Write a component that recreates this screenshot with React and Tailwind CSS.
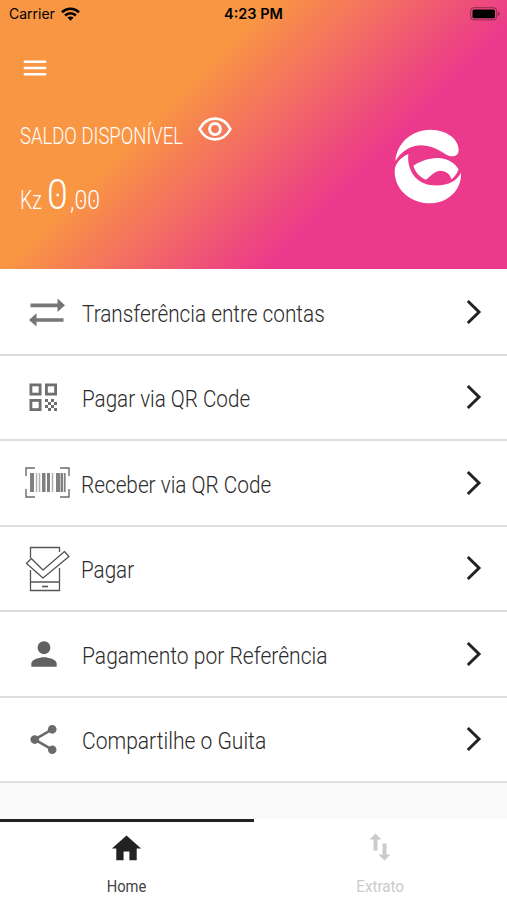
import React, { useState } from "react";
import { MdHome, MdMenu, MdPerson, MdShare } from "react-icons/md";

function WifiIcon() {
  return (
    <svg width="19" height="14" viewBox="0 0 19 14" fill="none" stroke="#000" strokeWidth="2.7">
      <path d="M1 5.2C5.8 .6 13.2 .6 18 5.2" />
      <path d="M4.1 8.4c3.1-2.9 7.7-2.9 10.8 0" />
      <path d="M9.5 13.8 6.4 10.6c1.8-1.6 4.4-1.6 6.2 0z" fill="#000" stroke="none" />
    </svg>
  );
}

function BatteryIcon() {
  return (
    <svg width="31" height="14" viewBox="0 0 31 14">
      <rect x=".7" y=".7" width="26" height="12.2" rx="3.2" fill="none" stroke="#000" strokeOpacity=".4" />
      <rect x="2.5" y="2.4" width="22.5" height="8.8" rx="1.5" fill="#000" />
      <path d="M28 4.5c2.3.8 2.3 3.8 0 4.6z" fill="#000" fillOpacity=".4" />
    </svg>
  );
}

function EyeIcon() {
  return (
    <svg width="34" height="24" viewBox="0 0 34 24" fill="none" stroke="#fff">
      <path d="M1.600 12C5 5.300 10 1.700 17 1.700S29 5.300 32.400 12C29 18.700 24 22.300 17 22.300S5 18.700 1.600 12z" strokeWidth="2.700" strokeLinejoin="round" />
      <circle cx="17" cy="12" r="5.400" strokeWidth="3" />
    </svg>
  );
}

function Logo() {
  return (
    <svg width="76" height="80" viewBox="0 0 228 240" fill="#fff">
      <path d="M16 105C20 55 60 12 122 11C175 12 206 42 206 72C206 89 192 93 178 90C160 85 138 58 92 58C55 60 32 80 16 105z" />
      <path d="M55 84C30 95 14 115 14 135C14 195 65 231 118 232C175 232 216 190 213 140C200 165 175 180 130 178C80 175 50 135 55 84z" />
      <path d="M70 119C95 103 120 96 148 96C175 98 195 112 206 130C200 145 192 155 184 160C182 145 168 134 150 134C132 136 122 150 108 161C88 153 76 138 70 119z" />
    </svg>
  );
}

function TransferIcon() {
  return (
    <svg width="36" height="29" viewBox="0 0 36 29" fill="#757575">
      <path d="M1.500 5.500h27V.5L36 7.300l-7.500 6.800V9.200h-27z" />
      <path d="M34.500 20.200h-27v-5L0 22l7.500 6.500v-4.800h27z" />
    </svg>
  );
}

const QR_DOTS = [[17, 16], [23, 16], [20, 19], [26, 19], [17, 22], [23, 22], [20, 25], [26, 25]];

function QrIcon() {
  return (
    <svg width="29" height="29" viewBox="0 0 29 29">
      <g fill="none" stroke="#6f6f6f" strokeWidth="2.800">
        <rect x="1.900" y="1.900" width="9.200" height="9.200" />
        <rect x="17.400" y="1.900" width="9.200" height="9.200" />
        <rect x="1.900" y="17.400" width="9.200" height="9.200" />
      </g>
      {QR_DOTS.map(([x, y]) => (
        <rect key={`${x}-${y}`} x={x - 1} y={y} width="3" height="3" fill="#6f6f6f" />
      ))}
    </svg>
  );
}

function BarcodeIcon() {
  return (
    <svg width="46" height="32" viewBox="0 0 46 32">
      <path d="M1 9V1h9M35 1h9v8M44 22v8h-9M10 30H1v-8" fill="none" stroke="#6b6b6b" strokeWidth="1.400" />
      <g fill="#808080">
        <path d="M5 6h4v19H5z" />
        <path d="M17 6h3.500v19H17zM22 6h3v19h-3z" />
        <path d="M31 6h4.500v19H31zM36 6h2v19h-2zM38.800 6h1.800v19h-1.800z" />
      </g>
      <path d="M11.500 6v19M14.500 6v19M27.500 6v19" stroke="#b0b0b0" strokeWidth="1.500" />
    </svg>
  );
}

function PayIcon() {
  return (
    <svg width="46" height="46" viewBox="0 0 46 46" fill="none" stroke="#555" strokeWidth="1.300">
      <path d="M5.500 12V1.500h29V6M5.500 24v20.500h29V22M5.500 36h29" />
      <path d="M17 40.500h6" strokeWidth="1.600" />
      <path d="M1.500 17.500 6.300 12.500 18 24 39.500 5.500 44 10.500 18 32z" strokeLinejoin="round" />
    </svg>
  );
}

function ChevronIcon() {
  return (
    <svg width="16" height="26" viewBox="0 0 16 26" fill="none" stroke="#222" strokeWidth="3">
      <path d="M1.800 2 13 13 1.800 24" />
    </svg>
  );
}

function StatementIcon() {
  return (
    <svg width="22" height="28" viewBox="0 0 22 28" fill="#cbcbcb">
      <path d="M6.500.5 12.500 6.500h-4v11h-4v-11h-4z" />
      <path d="M15.500 27.500 9.500 21.500h4v-11h4v11h4z" />
    </svg>
  );
}

// Zero with the small dot in its middle
function DottedZero({ dot }) {
  return (
    <span className="relative inline-block">
      0
      <span className={`absolute left-1/2 top-1/2 -translate-x-1/2 -translate-y-1/2 rounded-full bg-white ${dot}`} />
    </span>
  );
}

const items = [
  { label: "Transferência entre contas", icon: <TransferIcon />, pad: "pl-[29px]", text: "ml-[82px] scale-x-[0.865]" },
  { label: "Pagar via QR Code", icon: <QrIcon />, pad: "pl-[29px]", text: "ml-[82px] scale-x-[0.86]" },
  { label: "Receber via QR Code", icon: <BarcodeIcon />, pad: "pl-[25px]", text: "ml-[81px] scale-x-[0.865]" },
  { label: "Pagar", icon: <PayIcon />, pad: "pl-[25px]", text: "ml-[81px] scale-x-[0.86]" },
  { label: "Pagamento por Referência", icon: <MdPerson size={38} color="#616161" />, pad: "pl-[25px]", text: "ml-[82px] scale-x-[0.877]" },
  { label: "Compartilhe o Guita", icon: <MdShare size={35} color="#6a6a6a" />, pad: "pl-[26px]", text: "ml-[82px] scale-x-[0.877]" },
];

export default function App() {
  const [activeTab, setActiveTab] = useState("home");

  return (
    <div className="flex h-[900px] w-[507px] flex-col overflow-hidden bg-[#fafafa] font-['Roboto',sans-serif]">
      {/* Header */}
      <header className="h-[269px] shrink-0 bg-[linear-gradient(135deg,#f99643_35%,#eb398b_69%)] text-white">
        <div className="grid h-7 grid-cols-3 items-center pl-[9px] pr-[6px] font-['Inter',sans-serif] text-black">
          <div className="flex items-center gap-1.5 text-[14px] leading-none">
            <span>Carrier</span>
            <WifiIcon />
          </div>
          <span className="pr-[3px] text-center text-[14.500px] font-semibold leading-none">4:23 PM</span>
          <span className="flex justify-end"><BatteryIcon /></span>
        </div>

        <button className="ml-5 mt-[25px] block">
          <MdMenu size={30} />
        </button>

        <div className="flex justify-between pl-5 pr-[41px]">
          <div>
            <div className="mt-[34px] flex h-[36px] w-[220px] items-start">
              <span className="mt-[5px] w-[178px] origin-left scale-x-[0.77] whitespace-nowrap text-[24px] font-light leading-7">
                SALDO DISPONÍVEL
              </span>
              <EyeIcon />
            </div>
            <div className="mt-[21px] flex h-[48px] items-baseline whitespace-nowrap font-light leading-none">
              <span className="w-[27px] origin-left scale-x-[0.78] text-[25px]">Kz</span>
              <span className="w-[23px] origin-left scale-x-[0.89] text-[42px]"><DottedZero dot="size-[3px]" /></span>
              <span className="origin-left scale-x-[0.92] text-[25px]">,<DottedZero dot="size-[2px]" /><DottedZero dot="size-[2px]" /></span>
            </div>
          </div>
          <div className="mt-[43px]"><Logo /></div>
        </div>
      </header>

      {/* Menu options */}
      <main className="bg-white pt-px">
        {items.map((item) => (
          <button
            key={item.label}
            className="grid h-[85.5px] w-full grid-cols-1 items-center border-b-2 border-[#dedede] bg-white text-left"
          >
            <span className={`col-start-1 row-start-1 mt-px ${item.pad}`}>{item.icon}</span>
            <span className={`col-start-1 row-start-1 mt-1 w-max origin-left text-[24px] font-light leading-8 text-[#2b2b2b] ${item.text}`}>
              {item.label}
            </span>
            <span className="col-start-1 row-start-1 justify-self-end pr-[25px]"><ChevronIcon /></span>
          </button>
        ))}
      </main>

      {/* Bottom tabs */}
      <nav className="mt-auto grid h-[81px] shrink-0 grid-cols-2 bg-white">
        <button
          onClick={() => setActiveTab("home")}
          className={`flex flex-col items-center border-t-[3px] pt-[9px] ${activeTab === "home" ? "border-[#222] text-[#222]" : "border-transparent text-[#cbcbcb]"}`}
        >
          <MdHome size={35} />
          <span className="mt-[9px] scale-x-[0.92] text-[16px] leading-6 text-[#444]">Home</span>
        </button>
        <button
          onClick={() => setActiveTab("extrato")}
          className="flex flex-col items-center border-t-[3px] border-transparent pt-[11px] text-[#cbcbcb]"
        >
          <StatementIcon />
          <span className="mt-[14px] scale-x-[0.95] text-[16px] leading-6">Extrato</span>
        </button>
      </nav>
    </div>
  );
}
